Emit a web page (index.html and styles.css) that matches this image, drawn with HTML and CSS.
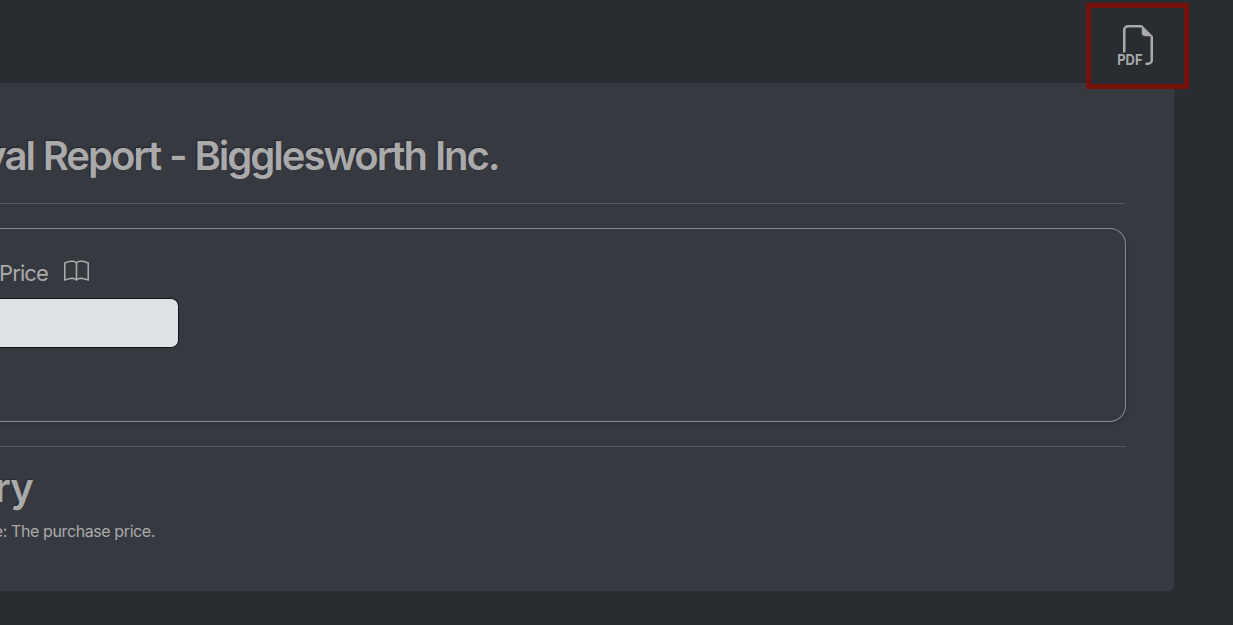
FILE: index.html
```html
<!DOCTYPE html>
<html lang="en">
<head>
<meta charset="utf-8">
<title>Report - Bigglesworth Inc.</title>
<link rel="stylesheet" href="styles.css">
</head>
<body>
<header class="toolbar">
  <button class="pdf-button" aria-label="PDF">
    <svg class="pdf-icon" viewBox="0 0 16 16">
      <path d="M14 4.5V14a2 2 0 0 1-2 2h-1v-1h1a1 1 0 0 0 1-1V4.5h-2A1.5 1.5 0 0 1 9.5 3V1H4a1 1 0 0 0-1 1v9H2V2a2 2 0 0 1 2-2h5.500z"/>
      <text class="pdf-label" x="-.3" y="15.9" textLength="10.1" lengthAdjust="spacingAndGlyphs">PDF</text>
    </svg>
  </button>
</header>
<main class="card">
  <h1 class="title"><span>val Report - Bigglesworth Inc.</span></h1>
  <section class="panel">
    <div class="field-label">
      <span class="field-name">Price</span>
      <svg class="book-icon" viewBox="0 0 16 16"><path d="M1 2.828c.885-.37 2.154-.769 3.388-.893 1.330-.134 2.458.063 3.112.752v9.746c-.935-.530-2.120-.603-3.213-.493-1.180.120-2.370.461-3.287.811zm7.500-.141c.654-.689 1.782-.886 3.112-.752 1.234.124 2.503.523 3.388.893v9.923c-.918-.350-2.107-.692-3.287-.810-1.094-.111-2.278-.039-3.213.492zM8 1.783C7.015.936 5.587.810 4.287.940c-1.514.153-3.042.672-3.994 1.105A.5.5 0 0 0 0 2.500v11a.5.5 0 0 0 .707.455c.882-.400 2.303-.881 3.680-1.020 1.409-.142 2.590.087 3.223.877a.5.5 0 0 0 .780 0c.633-.790 1.814-1.019 3.222-.877 1.378.139 2.800.620 3.681 1.020A.5.5 0 0 0 16 13.500v-11a.5.5 0 0 0-.293-.455c-.952-.433-2.480-.952-3.994-1.105C10.413.809 8.985.936 8 1.783"/></svg>
    </div>
    <div class="input"></div>
  </section>
  <section class="summary">
    <h2 class="subtitle"><span>ry</span></h2>
    <p class="note"><span>e: The purchase price.</span></p>
  </section>
</main>
</body>
</html>
```
FILE: styles.css
```css
* { box-sizing: border-box; }
body {
  margin: 0;
  height: 625px;
  overflow: hidden;
  background: #292c30;
  color: #aaa;
  font-family: Inter, "Liberation Sans", sans-serif;
}
.toolbar {
  display: flex;
  justify-content: flex-end;
  height: 83px;
  padding: 3px 44px 0 0;
}
.pdf-button {
  position: relative;
  z-index: 1;
  flex: none;
  display: flex;
  justify-content: center;
  width: 103px;
  height: 86px;
  padding: 17px 0 0;
  border: 5px solid #75130a;
  background: #292c30;
}
.pdf-icon { width: 40px; height: 40px; overflow: visible; fill: #aaa; }
.pdf-label { font: 700 5.6px Inter, sans-serif; }
.card {
  width: 1174px;
  height: 508px;
  padding: 45px 48px 0 0;
  border-radius: 0 0 6px 0;
  background: #373940;
}
.title, .subtitle, .note {
  display: flex;
  justify-content: flex-end;
  margin: 0;
  white-space: nowrap;
}
.title, .subtitle {
  font-size: 40px;
  font-weight: 600;
  line-height: 56px;
  text-shadow: -1px -1px 1px #25272b;
}
.title { width: 498.5px; letter-spacing: -2px; word-spacing: .8px; }
.panel {
  position: relative;
  height: 194px;
  margin-top: 44px;
  padding: 28px 0 0;
  border: 1px solid #868b91;
  border-left: 0;
  border-radius: 0 16px 16px 0;
  box-shadow: 1px 2px 3px #2f3136;
}
.panel::before {
  content: "";
  position: absolute;
  top: -26px;
  left: 0;
  right: 0;
  height: 1px;
  background: #56585c;
}
.field-label {
  display: flex;
  align-items: center;
  width: 90px;
  height: 32px;
}
.field-name { width: 65px; margin-left: -1px; font-size: 22px; letter-spacing: -.9px; }
.book-icon { flex: none; width: 25px; height: 25px; margin-top: -3px; fill: #aaa; }
.input {
  width: 179px;
  height: 50px;
  margin-top: 9px;
  border: 1px solid #151719;
  border-left: 0;
  border-radius: 0 8px 8px 0;
  background: #dee2e6;
}
.summary { margin-top: 24px; border-top: 1px solid #56585c; padding-top: 13px; }
.subtitle { width: 33px; letter-spacing: -.8px; }
.note { width: 155px; margin-top: 3px; font-size: 16px; line-height: 24px; letter-spacing: -.4px; }
```
